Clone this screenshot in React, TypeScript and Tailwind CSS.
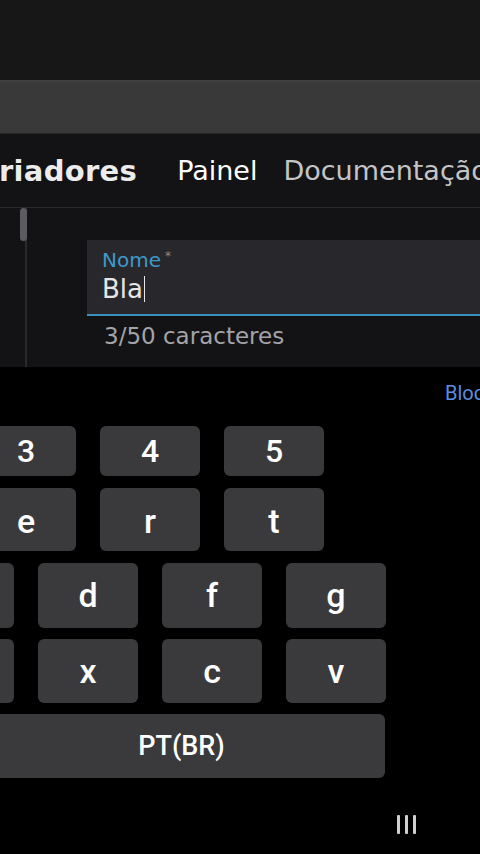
import React from "react"

const web = { fontFamily: '"DejaVu Sans", "Open Sans", sans-serif' }
const kb = { fontFamily: 'Roboto, "Noto Sans", sans-serif' }

function Key({ label, className = "" }: { label: string; className?: string }) {
  return (
    <div
      className={`flex shrink-0 items-center justify-center rounded-[6px] bg-[#3a3a3c] font-medium text-white ${className}`}
    >
      {label}
    </div>
  )
}

export default function App() {
  return (
    <div className="flex h-[854px] w-[480px] flex-col overflow-hidden bg-black">
      {/* browser chrome */}
      <div className="h-[80px] shrink-0 bg-[#171717]" />
      <div className="h-[54px] shrink-0 border-t-2 border-b border-t-[#404040] border-b-[#262626] bg-[#393939]" />

      {/* site header */}
      <div
        className="flex h-[74px] shrink-0 items-center whitespace-nowrap border-b border-[#2a2a2e] bg-[#131315] pt-[2px]"
        style={web}
      >
        <span className="-ml-[1px] text-[29px] font-bold tracking-[0.3px] text-[#ececec]">riadores</span>
        <span className="ml-[40px] text-[27px] text-white">Painel</span>
        <span className="ml-[26px] text-[27px] text-[#c4c4c6]">Documentação</span>
      </div>

      {/* content */}
      <div className="flex h-[159px] shrink-0 bg-[#131316]" style={web}>
        <div className="relative w-[27px] shrink-0 border-r-2 border-[#2a2a2e]">
          <div className="absolute right-[-2px] top-0 h-[33px] w-[7px] rounded-full bg-[#5c5c60]" />
        </div>
        <div className="flex flex-1 flex-col pl-[60px] pt-[32px]">
          <div className="flex h-[76px] flex-col border-b-2 border-[#3b8fbd] bg-[#28282c] pl-[15px] pt-[9px]">
            <div className="flex items-start text-[20px] leading-[22px] text-[#3e98c9]">
              Nome<span className="ml-[4px] text-[12px] leading-[14px] text-[#8a8a8e]">*</span>
            </div>
            <div className="mt-[4px] flex items-center text-[26px] leading-[28px] text-[#e6e6e6]">
              Bla<span className="ml-[1px] h-[26px] w-px bg-[#e6e6e6]" />
            </div>
          </div>
          <div className="pl-[17px] pt-[5px] text-[23px] leading-[30px] text-[#a4a4a8]">3/50 caracteres</div>
        </div>
      </div>

      {/* keyboard */}
      <div className="flex flex-1 flex-col bg-black" style={kb}>
        <div className="h-[59px] shrink-0 whitespace-nowrap pl-[445px] pt-[11px] text-[20px] text-[#5b8ee0]">
          Bloquear
        </div>
        <div className="-ml-[24px] flex gap-[24px] text-[32px]">
          <Key label="3" className="h-[50px] w-[100px]" />
          <Key label="4" className="h-[50px] w-[100px]" />
          <Key label="5" className="h-[50px] w-[100px]" />
        </div>
        <div className="-ml-[24px] mt-[12px] flex gap-[24px] text-[34px]">
          <Key label="e" className="h-[63px] w-[100px] pt-[4px]" />
          <Key label="r" className="h-[63px] w-[100px] pt-[4px]" />
          <Key label="t" className="h-[63px] w-[100px] pt-[4px]" />
        </div>
        <div className="-ml-[86px] mt-[12px] flex gap-[24px] text-[34px]">
          <Key label="s" className="h-[65px] w-[100px]" />
          <Key label="d" className="h-[65px] w-[100px]" />
          <Key label="f" className="h-[65px] w-[100px]" />
          <Key label="g" className="h-[65px] w-[100px]" />
        </div>
        <div className="-ml-[86px] mt-[11px] flex gap-[24px] text-[34px]">
          <Key label="z" className="h-[64px] w-[100px]" />
          <Key label="x" className="h-[64px] w-[100px]" />
          <Key label="c" className="h-[64px] w-[100px]" />
          <Key label="v" className="h-[64px] w-[100px]" />
        </div>
        <div className="mt-[11px] flex">
          <Key label="PT(BR)" className="-ml-[22px] h-[64px] w-[407px] text-[27px]" />
        </div>
        <div className="flex flex-1 items-start pl-[397px] pt-[37px]">
          <div className="flex gap-[5px]">
            <div className="h-[19px] w-[3px] rounded-[1px] bg-[#cfcfcf]" />
            <div className="h-[19px] w-[3px] rounded-[1px] bg-[#cfcfcf]" />
            <div className="h-[19px] w-[3px] rounded-[1px] bg-[#cfcfcf]" />
          </div>
        </div>
      </div>
    </div>
  )
}
